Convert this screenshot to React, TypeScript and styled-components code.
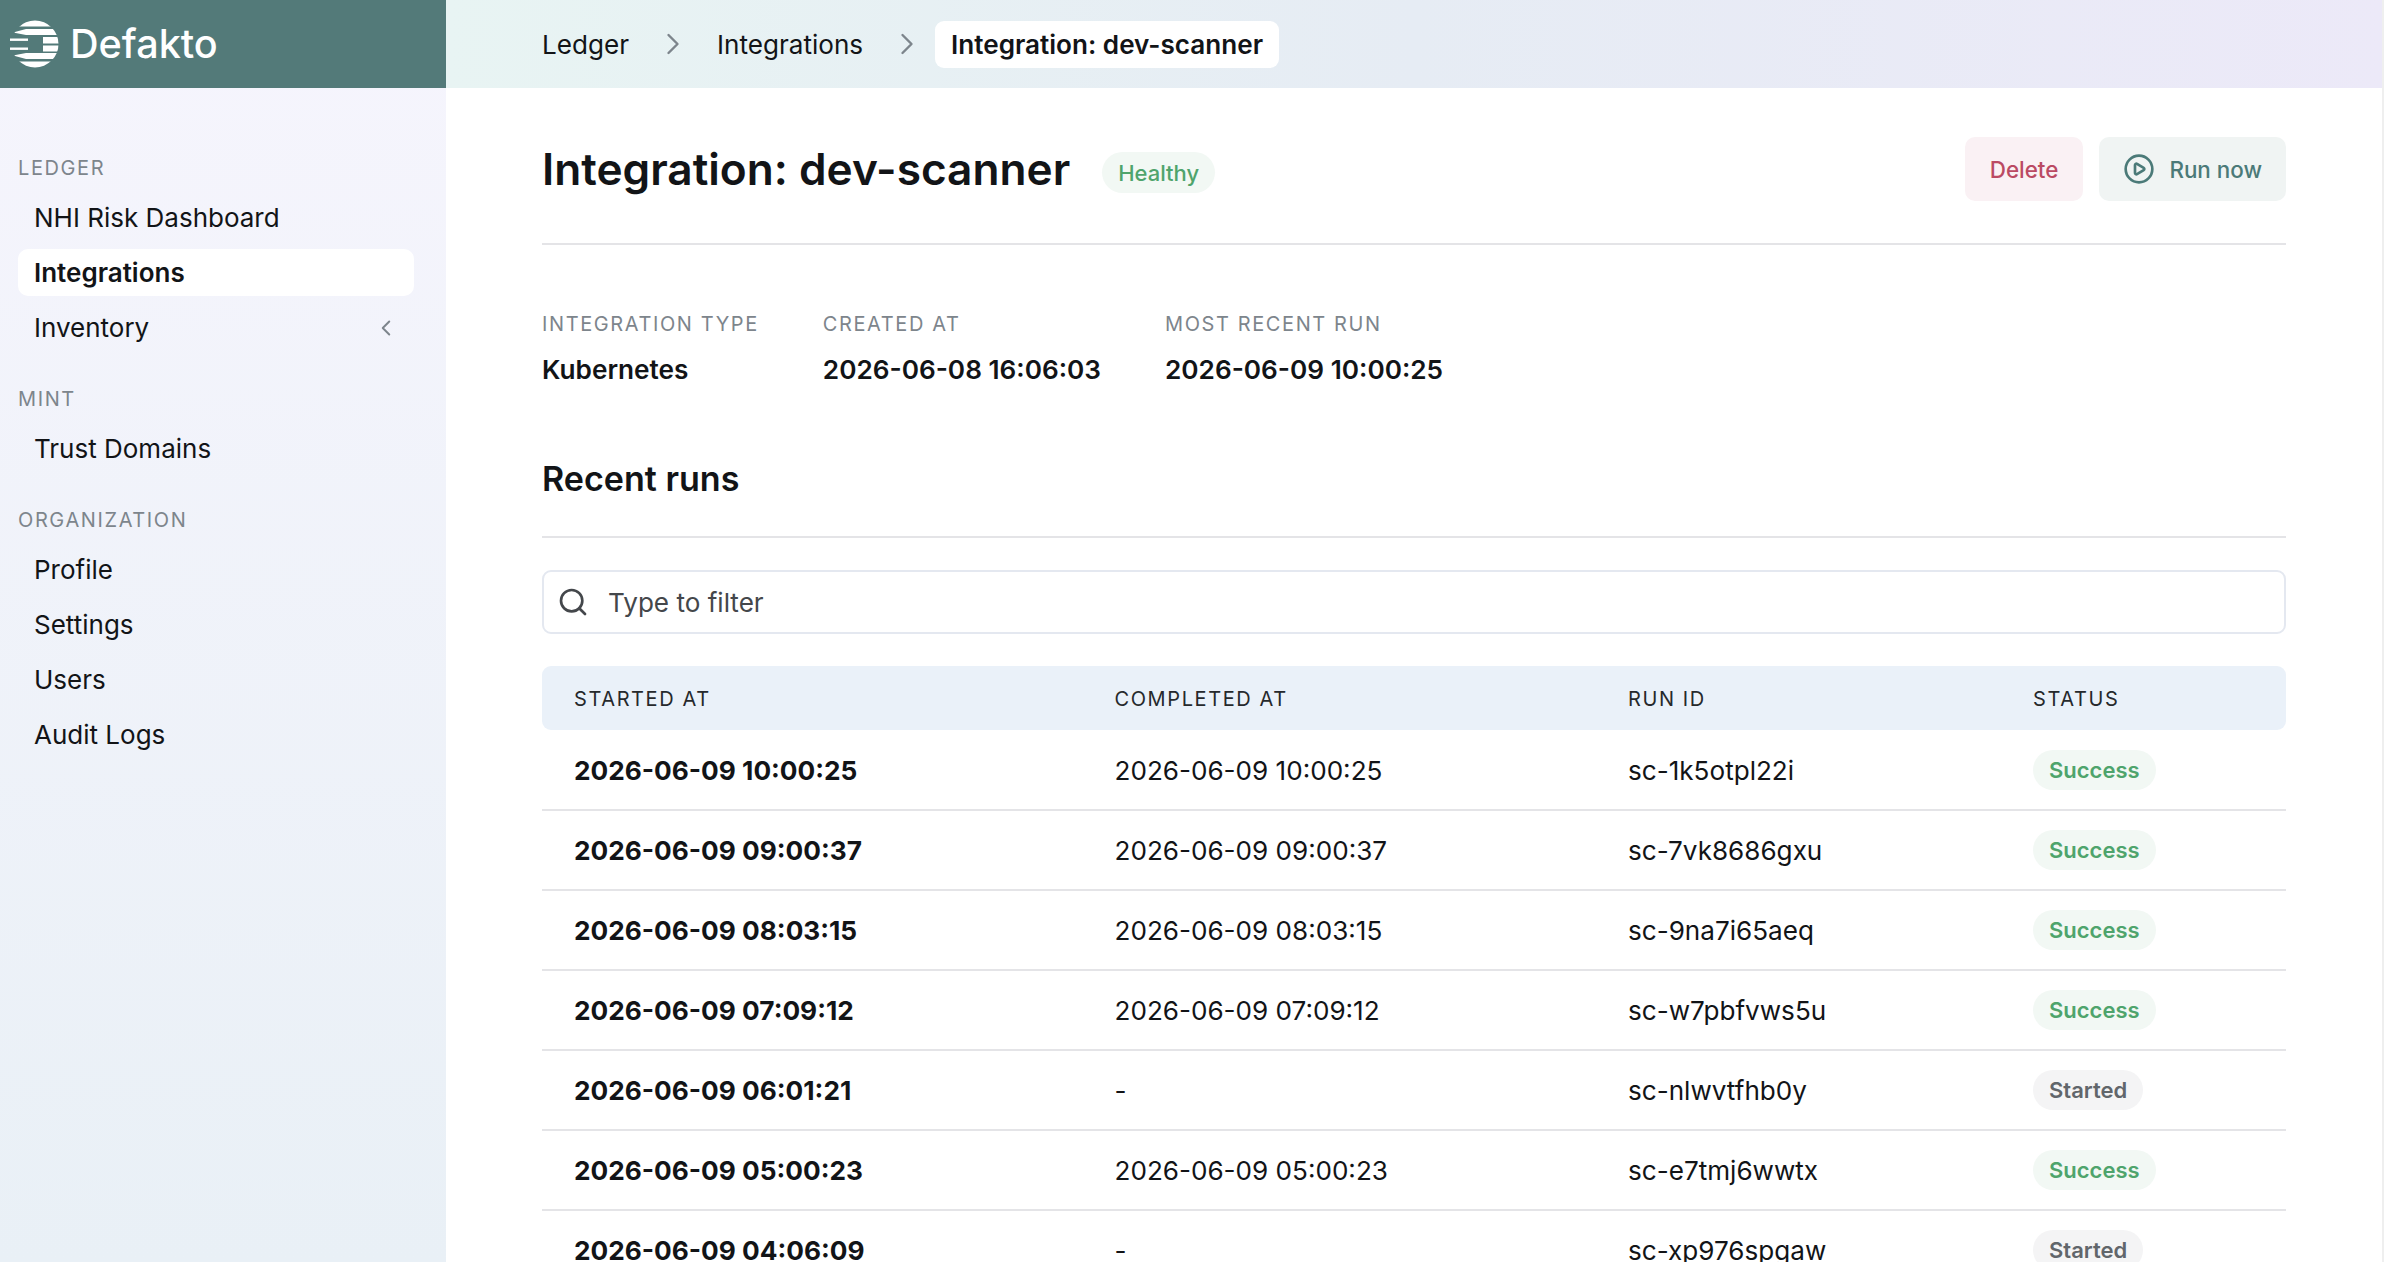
import React from "react";
import styled, { createGlobalStyle } from "styled-components";
import { ChevronLeft, ChevronRight, Search } from "lucide-react";

const Global = createGlobalStyle`
  html, body { margin: 0; padding: 0; height: 100%; overflow: hidden; background: #fff; }
  body { font-family: Inter, "Liberation Sans", sans-serif; color: #121417; }
  * { box-sizing: border-box; }
  p, h1, h2 { margin: 0; }
`;

const Page = styled.div`
  display: grid;
  grid-template-columns: 446px 1fr 2px;
  width: 2384px;
  height: 1262px;
  overflow: hidden;
`;

const Sidebar = styled.aside`
  display: flex;
  flex-direction: column;
  height: 100%;
  background: linear-gradient(180deg, #f6f5fd 0%, #e9f0f6 100%);
`;

const Brand = styled.div`
  display: flex;
  align-items: center;
  gap: 9px;
  flex: none;
  height: 88px;
  padding-left: 9px;
  background: #537a79;
  color: #fff;
  font-size: 39.6px;
  font-weight: 500;
`;

const Nav = styled.nav`
  display: flex;
  flex-direction: column;
  gap: 32px;
  padding: 64px 32px 0 18px;
`;

const NavSection = styled.div`
  display: flex;
  flex-direction: column;
  gap: 8px;
`;

const NavLabel = styled.div`
  height: 30px;
  margin-bottom: 4px;
  line-height: 33px;
  font-size: 20px;
  font-weight: 400;
  letter-spacing: 1.6px;
  color: #7d858c;
`;

const NavItem = styled.div<{ $active?: boolean }>`
  display: flex;
  align-items: center;
  justify-content: space-between;
  height: 47px;
  padding: 0 15px 0 16px;
  border-radius: 10px;
  font-size: 26px;
  font-weight: ${(p) => (p.$active ? 600 : 400)};
  background: ${(p) => (p.$active ? "#fff" : "transparent")};
  color: #121417;
  svg { color: #7d858c; }
`;

const Main = styled.main`
  display: flex;
  flex-direction: column;
  height: 100%;
  min-width: 0;
  overflow: hidden;
`;

const ScrollStrip = styled.div`
  background: #efefef;
`;

const TopBar = styled.header`
  display: flex;
  align-items: center;
  flex: none;
  height: 88px;
  padding-left: 96px;
  background: linear-gradient(90deg, #e8f4f3 0%, #e6ecf4 50%, #ece9f8 100%);
`;

const Crumb = styled.span<{ $current?: boolean }>`
  display: inline-flex;
  align-items: center;
  height: 47px;
  font-size: 26.1px;
  font-weight: ${(p) => (p.$current ? 600 : 400)};
  color: #121417;
  background: ${(p) => (p.$current ? "#fff" : "transparent")};
  border-radius: 9px;
  padding: ${(p) => (p.$current ? "0 16px" : "0")};
  margin-left: ${(p) => (p.$current ? "-16px" : "0")};
`;

const CrumbSep = styled.span`
  display: inline-flex;
  align-items: center;
  justify-content: center;
  width: 88px;
  color: #7d858c;
`;

const Content = styled.div`
  flex: 1;
  padding: 0 96px;
  min-height: 0;
  overflow: hidden;
`;

const TitleRow = styled.div`
  display: flex;
  align-items: center;
  justify-content: space-between;
  padding: 49px 0 42px;
  border-bottom: 2px solid #e4e4e7;
`;

const TitleGroup = styled.div`
  display: flex;
  align-items: center;
  gap: 32px;
`;

const Title = styled.h1`
  font-size: 44.2px;
  font-weight: 600;
  line-height: 64px;
  color: #121417;
`;

const Actions = styled.div`
  display: flex;
  gap: 16px;
`;

const Button = styled.button<{ $tone: "danger" | "primary" }>`
  display: inline-flex;
  align-items: center;
  gap: 14px;
  height: 64px;
  padding: 0 ${(p) => (p.$tone === "danger" ? "25px" : "24px")};
  border: 0;
  border-radius: 10px;
  font-family: inherit;
  font-size: 22.4px;
  font-weight: 500;
  background: ${(p) => (p.$tone === "danger" ? "#faf1f4" : "#f0f4f3")};
  color: ${(p) => (p.$tone === "danger" ? "#bb4a63" : "#4b7a78")};
`;

const Pill = styled.span<{ $tone: "good" | "neutral"; $big?: boolean }>`
  display: inline-flex;
  align-items: center;
  height: ${(p) => (p.$big ? "41px" : "40px")};
  padding: 0 16px;
  border-radius: 999px;
  font-size: 22px;
  font-weight: 600;
  background: ${(p) => (p.$tone === "good" ? "#f2f8f4" : "#f4f4f5")};
  color: ${(p) => (p.$tone === "good" ? "#4fa46c" : "#61666b")};
`;

const HealthyPill = styled(Pill)`
  margin-top: 7px;
  font-weight: 500;
`;

const Meta = styled.div`
  display: flex;
  gap: 64px;
  padding-top: 64px;
`;

const MetaItem = styled.div`
  display: flex;
  flex-direction: column;
  gap: 13px;
`;

const MetaLabel = styled.div`
  height: 30px;
  line-height: 30px;
  font-size: 20px;
  letter-spacing: 1.6px;
  color: #7d858c;
`;

const MetaValue = styled.div`
  height: 36px;
  line-height: 36px;
  font-size: 26.2px;
  font-weight: 600;
  color: #121417;
`;

const SectionTitle = styled.h2`
  margin-top: 71px;
  padding-bottom: 37px;
  border-bottom: 2px solid #e4e4e7;
  font-size: 34.1px;
  font-weight: 600;
  line-height: 40px;
  color: #121417;
`;

const FilterBox = styled.div`
  display: flex;
  align-items: center;
  gap: 19px;
  height: 64px;
  margin-top: 32px;
  padding: 0 13px;
  border: 2px solid #e4e8f0;
  border-radius: 9px;
  font-size: 26.1px;
  color: #44474b;
`;

const HeadRow = styled.div`
  display: grid;
  grid-template-columns: 540.5px 513.5px 405px 1fr;
  align-items: center;
  height: 64px;
  margin: 32px 0 1px;
  background: #eaf1f9;
  border-radius: 9px;
`;

const HeadCell = styled.div`
  padding: 1px 0 0 32px;
  font-size: 20px;
  font-weight: 400;
  letter-spacing: 1.6px;
  color: #26292c;
`;

const Row = styled.div`
  display: grid;
  grid-template-columns: 540.5px 513.5px 405px 1fr;
  align-items: center;
  height: 80px;
  border-bottom: 2px solid #e4e4e7;
`;

const Cell = styled.div<{ $strong?: boolean }>`
  padding-left: 32px;
  font-size: ${(p) => (p.$strong ? "26.25px" : "26.1px")};
  font-weight: ${(p) => (p.$strong ? 700 : 400)};
  color: #121417;
`;

function LogoMark() {
  return (
    <svg width="52" height="50" viewBox="0 0 52 50" aria-hidden="true">
      <defs>
        <clipPath id="logo-disc">
          <circle cx="26" cy="25" r="23.5" />
        </clipPath>
      </defs>
      <g clipPath="url(#logo-disc)" fill="#fff">
        <rect x="0" y="0" width="56" height="7.5" />
        <path d="M4 13.5 L17 10 H56 V16 H17 Z" />
        <rect x="34" y="18" width="22" height="6.5" />
        <rect x="34" y="26.5" width="22" height="6" />
        <path d="M4 36.5 L17 34 H56 V40 H17 Z" />
        <rect x="0" y="42.5" width="56" height="7.5" />
      </g>
      <rect x="1" y="19.5" width="18" height="2.4" fill="#fff" />
      <rect x="1" y="28.5" width="18" height="2.4" fill="#fff" />
    </svg>
  );
}

function CirclePlayIcon() {
  return (
    <svg width="32" height="32" viewBox="0 0 24 24" fill="none" stroke="currentColor" strokeWidth="2" strokeLinecap="round" strokeLinejoin="round" aria-hidden="true">
      <path d="M9 9.003a1 1 0 0 1 1.517-.859l4.997 2.997a1 1 0 0 1 0 1.718l-4.997 2.997A1 1 0 0 1 9 14.996z" />
      <circle cx="12" cy="12" r="10" />
    </svg>
  );
}

const navigation = [
  { label: "LEDGER", items: ["NHI Risk Dashboard", "Integrations", "Inventory"] },
  { label: "MINT", items: ["Trust Domains"] },
  { label: "ORGANIZATION", items: ["Profile", "Settings", "Users", "Audit Logs"] },
];

const meta = [
  { label: "INTEGRATION TYPE", value: "Kubernetes" },
  { label: "CREATED AT", value: "2026-06-08 16:06:03" },
  { label: "MOST RECENT RUN", value: "2026-06-09 10:00:25" },
];

const columns = ["STARTED AT", "COMPLETED AT", "RUN ID", "STATUS"];

const runs = [
  ["2026-06-09 10:00:25", "2026-06-09 10:00:25", "sc-1k5otpl22i", "Success"],
  ["2026-06-09 09:00:37", "2026-06-09 09:00:37", "sc-7vk8686gxu", "Success"],
  ["2026-06-09 08:03:15", "2026-06-09 08:03:15", "sc-9na7i65aeq", "Success"],
  ["2026-06-09 07:09:12", "2026-06-09 07:09:12", "sc-w7pbfvws5u", "Success"],
  ["2026-06-09 06:01:21", "-", "sc-nlwvtfhb0y", "Started"],
  ["2026-06-09 05:00:23", "2026-06-09 05:00:23", "sc-e7tmj6wwtx", "Success"],
  ["2026-06-09 04:06:09", "-", "sc-xp976spgaw", "Started"],
];

export default function App() {
  return (
    <>
      <Global />
      <Page>
        <Sidebar>
          <Brand>
            <LogoMark />
            Defakto
          </Brand>
          <Nav>
            {navigation.map((section) => (
              <NavSection key={section.label}>
                <NavLabel>{section.label}</NavLabel>
                {section.items.map((item) => (
                  <NavItem key={item} $active={item === "Integrations"}>
                    {item}
                    {item === "Inventory" && <ChevronLeft size={26} strokeWidth={1.8} />}
                  </NavItem>
                ))}
              </NavSection>
            ))}
          </Nav>
        </Sidebar>
        <Main>
          <TopBar>
            <Crumb>Ledger</Crumb>
            <CrumbSep><ChevronRight size={36} strokeWidth={1.6} /></CrumbSep>
            <Crumb>Integrations</Crumb>
            <CrumbSep><ChevronRight size={36} strokeWidth={1.6} /></CrumbSep>
            <Crumb $current>Integration: dev-scanner</Crumb>
          </TopBar>
          <Content>
            <TitleRow>
              <TitleGroup>
                <Title>Integration: dev-scanner</Title>
                <HealthyPill $tone="good" $big>Healthy</HealthyPill>
              </TitleGroup>
              <Actions>
                <Button $tone="danger">Delete</Button>
                <Button $tone="primary"><CirclePlayIcon />Run now</Button>
              </Actions>
            </TitleRow>
            <Meta>
              {meta.map((m) => (
                <MetaItem key={m.label}>
                  <MetaLabel>{m.label}</MetaLabel>
                  <MetaValue>{m.value}</MetaValue>
                </MetaItem>
              ))}
            </Meta>
            <SectionTitle>Recent runs</SectionTitle>
            <FilterBox>
              <Search size={32} strokeWidth={2} />
              Type to filter
            </FilterBox>
            <HeadRow>
              {columns.map((c) => (
                <HeadCell key={c}>{c}</HeadCell>
              ))}
            </HeadRow>
            {runs.map((r) => (
              <Row key={r[2]}>
                <Cell $strong>{r[0]}</Cell>
                <Cell>{r[1]}</Cell>
                <Cell>{r[2]}</Cell>
                <Cell>
                  <Pill $tone={r[3] === "Success" ? "good" : "neutral"}>{r[3]}</Pill>
                </Cell>
              </Row>
            ))}
          </Content>
        </Main>
        <ScrollStrip />
      </Page>
    </>
  );
}
